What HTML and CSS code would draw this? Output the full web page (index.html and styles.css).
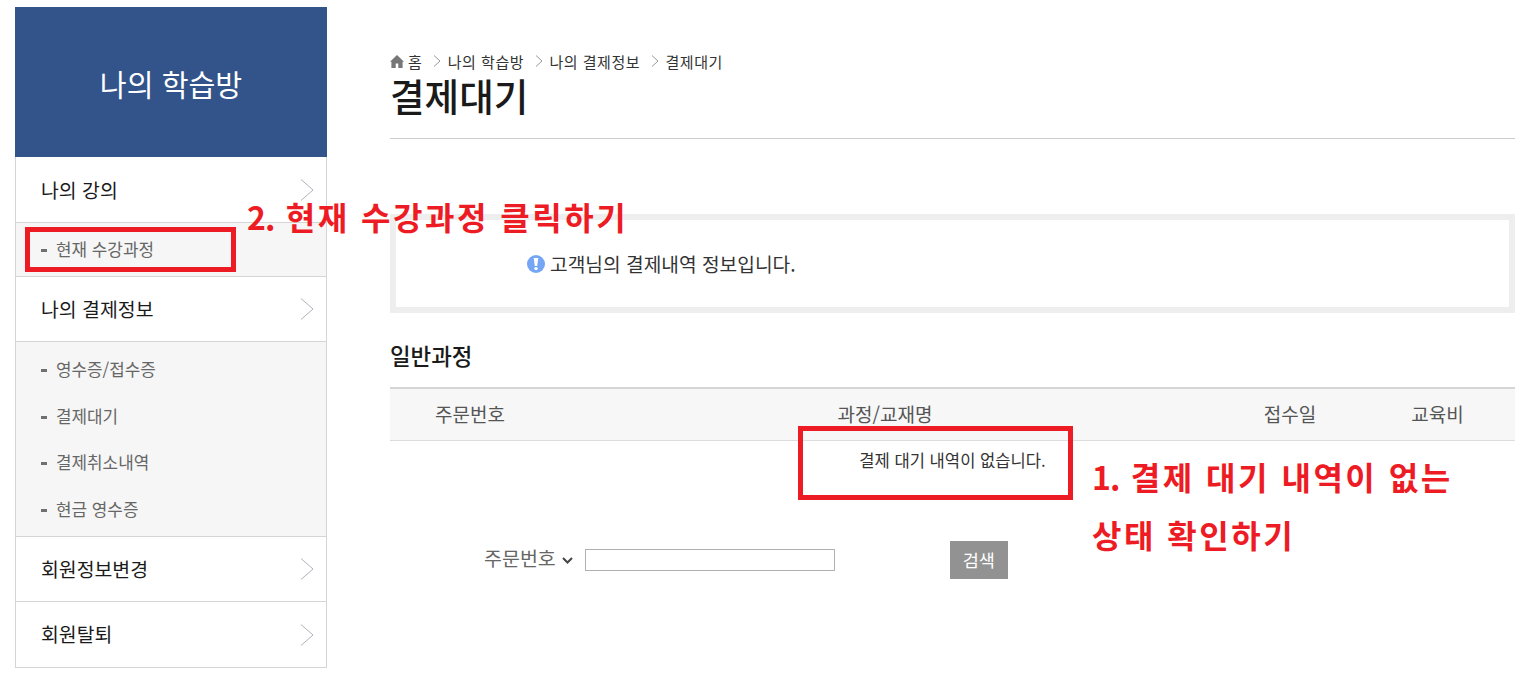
FILE: index.html
```html
<!DOCTYPE html>
<html lang="ko">
<head>
    <meta charset="UTF-8">
    <meta name="viewport" content="width=device-width, initial-scale=1.0">
    <title>결제대기</title>
    <link rel="stylesheet" href="styles.css">
</head>
<body>
    <div class="wrap">
        <aside class="side">
            <h2 class="side-title">나의 학습방</h2>
            <div class="menu menu-first">나의 강의
                <svg class="arrow" width="14" height="22" viewBox="0 0 14 22"><path d="M1 0.5 L13 11 L1 21.5" fill="none" stroke="#b0b0bc" stroke-width="1"/></svg>
            </div>
            <ul class="sub sub-one">
                <li>현재 수강과정</li>
            </ul>
            <div class="menu">나의 결제정보
                <svg class="arrow" width="14" height="22" viewBox="0 0 14 22"><path d="M1 0.5 L13 11 L1 21.5" fill="none" stroke="#b0b0bc" stroke-width="1"/></svg>
            </div>
            <ul class="sub">
                <li>영수증/접수증</li>
                <li>결제대기</li>
                <li>결제취소내역</li>
                <li>현금 영수증</li>
            </ul>
            <div class="menu">회원정보변경
                <svg class="arrow" width="14" height="22" viewBox="0 0 14 22"><path d="M1 0.5 L13 11 L1 21.5" fill="none" stroke="#b0b0bc" stroke-width="1"/></svg>
            </div>
            <div class="menu menu-last">회원탈퇴
                <svg class="arrow" width="14" height="22" viewBox="0 0 14 22"><path d="M1 0.5 L13 11 L1 21.5" fill="none" stroke="#b0b0bc" stroke-width="1"/></svg>
            </div>
        </aside>

        <main class="content">
            <div class="crumbs">
                <svg class="home" width="14" height="13" viewBox="0 0 14 13"><path d="M7 0 L14 6.8 L12.6 6.8 L12.6 13 L8.3 13 L8.3 8.5 L5.7 8.5 L5.7 13 L1.4 13 L1.4 6.8 L0 6.8 Z" fill="#777"/></svg>
                <span>홈</span>
                <svg class="sep" width="8" height="12" viewBox="0 0 8 12"><path d="M1 0.5 L7 6 L1 11.5" fill="none" stroke="#999" stroke-width="1"/></svg>
                <span>나의 학습방</span>
                <svg class="sep" width="8" height="12" viewBox="0 0 8 12"><path d="M1 0.5 L7 6 L1 11.5" fill="none" stroke="#999" stroke-width="1"/></svg>
                <span>나의 결제정보</span>
                <svg class="sep" width="8" height="12" viewBox="0 0 8 12"><path d="M1 0.5 L7 6 L1 11.5" fill="none" stroke="#999" stroke-width="1"/></svg>
                <span>결제대기</span>
            </div>
            <h1 class="page-title">결제대기</h1>

            <div class="info-box">
                <svg class="info-icon" width="18" height="18" viewBox="0 0 18 18"><circle cx="9" cy="9" r="9" fill="#74a6f5"/><path d="M6.7 3 H11.3 L10.2 11 H7.8 Z" fill="#fff"/><circle cx="9" cy="13.6" r="1.7" fill="#fff"/></svg>
                <span>고객님의 결제내역 정보입니다.</span>
            </div>

            <h3 class="section-title">일반과정</h3>
            <table class="pay-table">
                <thead>
                    <tr>
                        <th class="col-no">주문번호</th>
                        <th class="col-name">과정/교재명</th>
                        <th class="col-date">접수일</th>
                        <th class="col-fee">교육비</th>
                    </tr>
                </thead>
                <tbody>
                    <tr>
                        <td colspan="4">결제 대기 내역이 없습니다.</td>
                    </tr>
                </tbody>
            </table>

            <form class="search">
                <span class="search-label">주문번호</span>
                <svg class="chev" width="11" height="7" viewBox="0 0 11 7"><path d="M1 1 L5.5 5.5 L10 1" fill="none" stroke="#444" stroke-width="2"/></svg>
                <input class="search-input" type="text">
                <button class="search-btn" type="button">검색</button>
            </form>
        </main>
    </div>

    <!-- annotations drawn on top of the capture -->
    <div class="mark mark-menu"></div>
    <div class="mark mark-empty"></div>
    <div class="note note-two"><span class="num">2.</span> 현재 수강과정 클릭하기</div>
    <div class="note note-one"><span class="num">1.</span> 결제 대기 내역이 없는<br>상태 확인하기</div>
</body>
</html>
```

FILE: styles.css
```css
* {
    box-sizing: border-box;
}
html, body {
    margin: 0;
    padding: 0;
    height: 681px;
    overflow: hidden;
    background: #fff;
}
body {
    font-family: "Noto Sans CJK KR", "Noto Sans", sans-serif;
    color: #222;
    position: relative;
}
.wrap {
    display: flex;
    padding: 7px 19px 0 15px;
}

/* sidebar */
.side {
    width: 312px;
    flex: none;
}
.side-title {
    margin: 0;
    height: 150px;
    padding-top: 2px;
    background: #32548b;
    color: #fff;
    font-size: 29.2px;
    font-weight: 400;
    display: flex;
    align-items: center;
    justify-content: center;
}
.menu {
    height: 65px;
    border: 1px solid #d5d5d5;
    border-top: none;
    padding: 0 12px 2px 25px;
    font-size: 19.4px;
    color: #1a1a1a;
    display: flex;
    align-items: center;
    justify-content: space-between;
}
.arrow {
    margin-top: 2px;
}
.menu-first {
    height: 66px;
    padding-bottom: 0;
}
.menu-first .arrow {
    margin-top: 0;
}
.menu-last {
    height: 66px;
}
.sub {
    margin: 0;
    padding: 3.5px 0 4px 25px;
    list-style: none;
    border: 1px solid #d5d5d5;
    border-top: none;
    background-color: #f6f6f6;
    background-image: radial-gradient(#efefef 0.6px, transparent 0.7px);
    background-size: 4px 4px;
    height: 195px;
}
.sub-one {
    height: 54px;
    padding-top: 2px;
}
.sub li {
    height: 46.5px;
    font-size: 16.9px;
    color: #666;
    display: flex;
    align-items: center;
}
.sub li::before {
    content: "";
    flex: none;
    width: 6px;
    height: 3px;
    background: #707070;
    margin: 4px 9px 0 0;
}

/* main */
.content {
    flex: 1;
    margin-left: 63px;
}
.crumbs {
    display: flex;
    align-items: center;
    margin-top: 44px;
    height: 20px;
    font-size: 15px;
    letter-spacing: 0.5px;
    color: #333;
}
.home {
    margin-right: 4px;
}
.sep {
    margin: 0 6.5px 0 11px;
}
.page-title {
    margin: 0;
    height: 68px;
    font-size: 37.6px;
    font-weight: 500;
    color: #1a1a1a;
    line-height: 48px;
    border-bottom: 1px solid #ccc;
}
.info-box {
    margin-top: 75px;
    height: 99px;
    border: 6px solid #eee;
    padding: 0 0 0 131px;
    display: flex;
    align-items: center;
    font-size: 19.2px;
    color: #333;
}
.info-icon {
    margin-right: 5px;
}
.section-title {
    margin: 28px 0 0;
    height: 46px;
    font-size: 22.4px;
    font-weight: 500;
    line-height: 28px;
    color: #1a1a1a;
}
.pay-table {
    width: 100%;
    border-collapse: collapse;
    table-layout: fixed;
}
.pay-table th {
    height: 52px;
    padding: 0 0 2px;
    background: #f7f7f7;
    border-top: 2px solid #d5d5d5;
    border-bottom: 1px solid #ddd;
    font-size: 19px;
    font-weight: 400;
    color: #555;
}
.col-no { width: 160px; }
.col-name { width: 670px; }
.col-date { width: 140px; }
.pay-table td {
    height: 40px;
    padding: 0;
    text-align: center;
    font-size: 16.6px;
    color: #333;
}
.search {
    display: flex;
    align-items: center;
    margin-top: 61px;
    padding-left: 94px;
}
.search-label {
    font-size: 19.5px;
    color: #666;
    margin-bottom: 5px;
}
.chev {
    margin: 0 12px 0 6px;
}
.search-input {
    width: 250px;
    height: 22px;
    border: 1px solid #b0b0b0;
    background: #fff;
    padding: 0;
}
.search-btn {
    width: 58px;
    height: 38px;
    margin-left: 115px;
    border: none;
    background: #929292;
    color: #fff;
    font-family: inherit;
    font-size: 17.5px;
    padding: 0 0 2px;
}

/* annotations */
.mark {
    position: absolute;
    border: 5px solid #ed1c24;
}
.mark-menu {
    left: 25px;
    top: 227px;
    width: 211px;
    height: 45px;
}
.mark-empty {
    left: 798px;
    top: 426px;
    width: 275px;
    height: 74px;
}
.note {
    position: absolute;
    color: #ed1c24;
    font-weight: 700;
    font-size: 32px;
    letter-spacing: 2.5px;
    white-space: nowrap;
}
.num {
    letter-spacing: -1px;
}
.note-two {
    left: 247px;
    top: 193px;
    line-height: 46px;
}
.note-one {
    left: 1092px;
    top: 447px;
    line-height: 58px;
}
```
